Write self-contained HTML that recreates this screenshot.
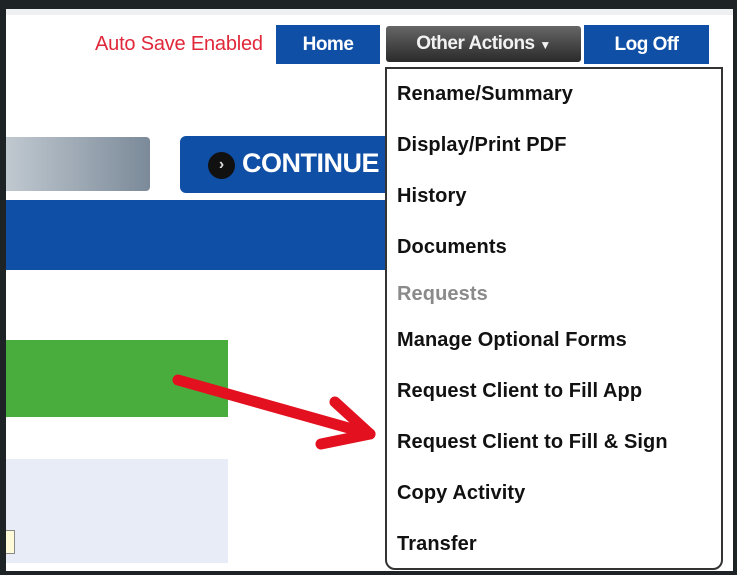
<!DOCTYPE html>
<html><head><meta charset="utf-8"><style>
*{margin:0;padding:0;box-sizing:border-box}
body{width:737px;height:575px;background:#1e2326;position:relative;overflow:hidden;font-family:"Liberation Sans",Arial,sans-serif}
#page{position:absolute;left:6px;top:9px;width:727px;height:562px;background:#fff;overflow:hidden}
#page .topstrip{position:absolute;left:0;top:0;width:100%;height:6px;background:#eef0f1}
.abs{position:absolute}
.btn{position:absolute;color:#fff;font-weight:bold;font-size:19px;text-align:center;letter-spacing:-0.5px}
.item{position:absolute;left:10px;font-weight:bold;font-size:20px;color:#111;line-height:20px;letter-spacing:0.1px}
</style></head><body>
<div id="page">
<div class="topstrip"></div>
<div class="abs" style="left:89px;top:24px;color:#e0283a;font-size:20px;letter-spacing:-0.2px">Auto Save Enabled</div>
<div class="btn" style="left:270px;top:16px;width:104px;height:39px;background:#0f4fa6;line-height:39px">Home</div>
<div class="btn" style="left:380px;top:17px;width:195px;height:36px;background:linear-gradient(#666,#2a2a2a);border-radius:3px;line-height:36px;color:#f2f2f2">Other Actions <span style="font-size:12px">▼</span></div>
<div class="btn" style="left:578px;top:16px;width:125px;height:39px;background:#0f4fa6;line-height:39px">Log Off</div>
<div class="abs" style="left:-6px;top:128px;width:150px;height:54px;border-radius:4px;background:linear-gradient(90deg,#c3cbd2,#7b8a99)"></div>
<div class="abs" style="left:174px;top:127px;width:220px;height:57px;border-radius:6px;background:#0f4fa6"></div>
<div class="abs" style="left:202px;top:143px;width:27px;height:27px;border-radius:50%;background:#111;color:#ddd;font-weight:bold;font-size:16px;text-align:center;line-height:26px">›</div>
<div class="abs" style="left:236px;top:139px;color:#fff;font-weight:bold;font-size:27px;letter-spacing:-0.5px">CONTINUE</div>
<div class="abs" style="left:0;top:191px;width:390px;height:70px;background:#0f4fa6"></div>
<div class="abs" style="left:0;top:331px;width:222px;height:77px;background:#49ad3d"></div>
<div class="abs" style="left:0;top:450px;width:222px;height:104px;background:#e8ecf6"></div>
<div class="abs" style="left:-2px;top:521px;width:11px;height:24px;background:#fffbd8;border:1px solid #888"></div>
<div class="abs" style="left:379px;top:58px;width:338px;height:503px;border:2px solid #333;border-radius:0 0 10px 10px;background:#fff">
<div class="item" style="top:15px">Rename/Summary</div>
<div class="item" style="top:66px">Display/Print PDF</div>
<div class="item" style="top:117px">History</div>
<div class="item" style="top:168px">Documents</div>
<div class="item" style="top:215px;color:#8a8a8a">Requests</div>
<div class="item" style="top:261px">Manage Optional Forms</div>
<div class="item" style="top:312px">Request Client to Fill App</div>
<div class="item" style="top:363px">Request Client to Fill &amp; Sign</div>
<div class="item" style="top:414px">Copy Activity</div>
<div class="item" style="top:465px">Transfer</div>
</div>
<svg class="abs" style="left:0;top:0" width="727" height="562"><g stroke="#e3101f" stroke-width="11" stroke-linecap="round" stroke-linejoin="round" fill="none"><path d="M172 371 L364 425"/><path d="M329 393 L364 425 L315 435"/></g></svg>
</div>
</body></html>
